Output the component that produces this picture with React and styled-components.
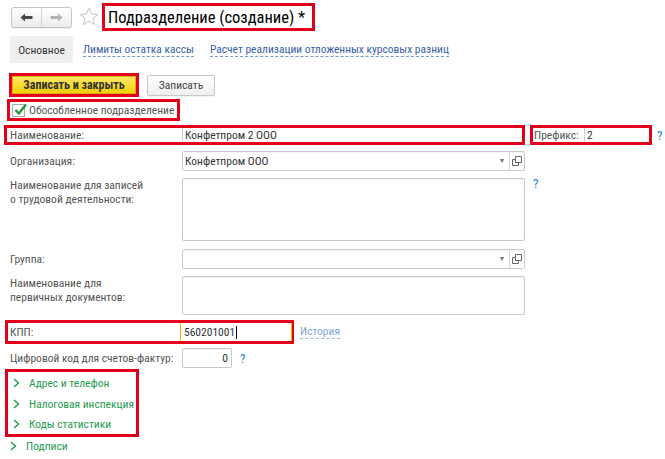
import React from "react";
import styled, { createGlobalStyle } from "styled-components";

const Global = createGlobalStyle`
  html, body { margin: 0; padding: 0; background: #fff; }
  body { font-family: "Roboto Condensed", "Liberation Sans", Arial, sans-serif; font-size: 11.5px; color: #555; }
  * { box-sizing: border-box; }
`;

const RED = "#e2001a";

const Page = styled.div`
  width: 665px;
  height: 459px;
  overflow: hidden;
  padding: 0 0 0 10px;
  position: relative;
`;

const TopBar = styled.div`
  display: flex;
  align-items: center;
  height: 28px;
  margin-top: 3px;
`;

const NavGroup = styled.div`
  display: flex;
  margin-left: 1px;
  width: 61px;
  height: 21px;
  border: 1px solid #c4c4c4;
  border-radius: 3px;
  background: linear-gradient(#ffffff, #ececec);
  box-shadow: 0 1px 1px rgba(0,0,0,0.08);
`;

const NavBtn = styled.div`
  flex: 1;
  display: flex;
  align-items: center;
  justify-content: center;
  & + & { border-left: 1px solid #d4d4d4; }
`;

const StarWrap = styled.div`
  margin-left: 7px;
  width: 20px;
  height: 20px;
  display: flex;
  align-items: center;
  justify-content: center;
`;

const TitleBox = styled.div`
  margin-left: 3px;
  height: 28px;
  width: 213px;
  border: 3px solid ${RED};
  padding-left: 3px;
  display: flex;
  align-items: center;
  font-size: 16.5px;
  color: #000;
  white-space: nowrap;
`;

const Tabs = styled.div`
  display: flex;
  align-items: center;
  margin-top: 5px;
  height: 27px;
`;

const ActiveTab = styled.div`
  width: 63px;
  height: 27px;
  background: #efefef;
  display: flex;
  align-items: center;
  justify-content: center;
  color: #333;
  border-radius: 2px;
`;

const TabLink = styled.span`
  margin-left: ${p => p.$ml}px;
  color: #3a5ea8;
  border-bottom: 1px dashed #7f97c8;
  line-height: 13px;
  white-space: nowrap;
`;

const ButtonBar = styled.div`
  display: flex;
  align-items: center;
  margin-top: 10px;
  margin-left: -1px;
`;

const HighlightBtn = styled.div`
  border: 3px solid ${RED};
  height: 24px;
  width: 130px;
`;

const PrimaryButton = styled.div`
  height: 18px;
  width: 124px;
  background: linear-gradient(#ffe86a, #f6cf00);
  border: 1px solid #d7b000;
  display: flex;
  align-items: center;
  justify-content: center;
  font-weight: bold;
  font-size: 12px;
  color: #333;
  white-space: nowrap;
`;

const Button = styled.div`
  margin-left: 8px;
  height: 21px;
  width: 68px;
  border: 1px solid #c8c8c8;
  border-radius: 2px;
  background: linear-gradient(#ffffff, #efefef);
  display: flex;
  align-items: center;
  justify-content: center;
  color: #444;
  box-shadow: 0 1px 1px rgba(0,0,0,0.06);
`;

const CheckRow = styled.div`
  margin-top: 2px;
  margin-left: -3px;
  width: 173px;
  height: 22px;
  border: 3px solid ${RED};
  display: flex;
  align-items: center;
  padding-left: 2px;
  white-space: nowrap;
`;

const CheckBox = styled.div`
  width: 13px;
  height: 13px;
  border: 1px solid #a9a9a9;
  background: #fff;
  position: relative;
  margin-right: 4px;
  flex: none;
  svg { position: absolute; left: 0px; top: -3px; }
`;

const Row = styled.div`
  display: flex;
  align-items: ${p => (p.$top ? "flex-start" : "center")};
  margin-top: ${p => p.$mt || 0}px;
`;

const HighlightRow = styled.div`
  display: flex;
  align-items: center;
  border: 3px solid ${RED};
  height: ${p => p.$h}px;
  width: ${p => p.$w}px;
  margin-left: ${p => p.$ml}px;
  padding-left: ${p => p.$pl}px;
`;

const Label = styled.div`
  width: ${p => p.$w || 172}px;
  flex: none;
  line-height: 14px;
  white-space: nowrap;
`;

const PlainValue = styled.div`
  flex: 1;
  align-self: stretch;
  border-left: 1px solid #cfcfcf;
  padding-left: 2px;
  display: flex;
  align-items: center;
  color: #333;
  white-space: nowrap;
`;

const Field = styled.div`
  width: ${p => p.$w || 343}px;
  height: ${p => p.$h || 20}px;
  border: 1px solid #c9c9c9;
  border-radius: 2px;
  background: #fff;
  display: flex;
  align-items: center;
  color: #333;
  justify-content: ${p => (p.$right ? "flex-end" : "flex-start")};
  padding: 0 ${p => (p.$right ? 3 : 2)}px;
  box-shadow: inset 0 1px 1px rgba(0,0,0,0.04);
`;

const FieldText = styled.div`
  flex: 1;
  white-space: nowrap;
`;

const FieldBtn = styled.div`
  width: 14px;
  align-self: stretch;
  display: flex;
  align-items: center;
  justify-content: center;
  color: #777;
  font-size: 7px;
  & + & { border-left: 1px solid #d6d6d6; width: 15px; margin-right: -2px; }
`;

const Help = styled.span`
  color: #2c7fc6;
  font-size: 13px;
  margin-left: ${p => p.$ml || 8}px;
  align-self: ${p => (p.$top ? "flex-start" : "center")};
  margin-top: ${p => p.$mt || 0}px;
`;

const FocusField = styled.div`
  flex: 1;
  align-self: stretch;
  border-left: 1px solid #f1b400;
  border-right: 1px solid #f1b400;
  margin-left: -1px;
  margin-right: -1px;
  padding-left: 3px;
  display: flex;
  align-items: center;
  color: #333;
`;

const Caret = styled.span`
  display: inline-block;
  width: 1px;
  height: 13px;
  background: #000;
  margin-left: 1px;
`;

const HistoryLink = styled.span`
  margin-left: 6px;
  color: #7ea2da;
  border-bottom: 1px dashed #9ab5e0;
  line-height: 13px;
`;

const GroupBox = styled.div`
  margin-top: 1px;
  margin-left: -5px;
  width: 134px;
  border: 3px solid ${RED};
  padding-left: 5px;
`;

const GroupItem = styled.div`
  height: ${p => p.$h || 21}px;
  display: flex;
  align-items: center;
  color: #1f9a4e;
  white-space: nowrap;
  margin-top: ${p => p.$mt || 0}px;
  svg { margin-right: 9px; flex: none; }
`;

const Chevron = () => (
  <svg width="7" height="10" viewBox="0 0 7 10">
    <path d="M1 1 L5.5 5 L1 9" fill="none" stroke="#1f9a4e" strokeWidth="1.4" />
  </svg>
);

const ArrowLeft = ({ color }) => (
  <svg width="13" height="9" viewBox="0 0 13 9">
    <path d="M0.5 4.5 L5 0.5 L5 3 L12.5 3 L12.5 6 L5 6 L5 8.5 Z" fill={color} />
  </svg>
);

const ArrowRight = ({ color }) => (
  <svg width="13" height="9" viewBox="0 0 13 9">
    <path d="M12.5 4.5 L8 0.5 L8 3 L0.5 3 L0.5 6 L8 6 L8 8.5 Z" fill={color} />
  </svg>
);

const Star = () => (
  <svg width="20" height="20" viewBox="0 0 20 20">
    <path
      d="M10 1.2 L12.6 7 L18.8 7.4 L14 11.4 L15.6 17.6 L10 14.2 L4.4 17.6 L6 11.4 L1.2 7.4 L7.4 7 Z"
      fill="#fff"
      stroke="#c4c4c4"
      strokeWidth="1"
      strokeLinejoin="round"
    />
  </svg>
);

const OpenIcon = () => (
  <svg width="10" height="10" viewBox="0 0 10 10">
    <path d="M3.5 0.5 H9.5 V6.5 H3.5 Z" fill="none" stroke="#666" strokeWidth="1" />
    <path d="M3.5 3.5 H0.5 V9.5 H6.5 V6.5" fill="none" stroke="#666" strokeWidth="1" />
  </svg>
);

const Check = () => (
  <svg width="15" height="15" viewBox="0 0 15 15">
    <path d="M2.5 8 L5.8 11.5 L13 2.5" fill="none" stroke="#23953a" strokeWidth="2.4" />
  </svg>
);

const SelectField = ({ value }) => (
  <Field>
    <FieldText>{value}</FieldText>
    <FieldBtn>▼</FieldBtn>
    <FieldBtn><OpenIcon /></FieldBtn>
  </Field>
);

export default function App() {
  return (
    <Page>
      <Global />
      <TopBar>
        <NavGroup>
          <NavBtn><ArrowLeft color="#4a4a4a" /></NavBtn>
          <NavBtn><ArrowRight color="#b0b0b0" /></NavBtn>
        </NavGroup>
        <StarWrap><Star /></StarWrap>
        <TitleBox>Подразделение (создание) *</TitleBox>
      </TopBar>

      <Tabs>
        <ActiveTab>Основное</ActiveTab>
        <TabLink $ml={10}>Лимиты остатка кассы</TabLink>
        <TabLink $ml={16}>Расчет реализации отложенных курсовых разниц</TabLink>
      </Tabs>

      <ButtonBar>
        <HighlightBtn>
          <PrimaryButton>Записать и закрыть</PrimaryButton>
        </HighlightBtn>
        <Button>Записать</Button>
      </ButtonBar>

      <CheckRow>
        <CheckBox><Check /></CheckBox>
        Обособленное подразделение
      </CheckRow>

      <Row $mt={4}>
        <HighlightRow $h={20} $w={521} $ml={-6} $pl={3}>
          <Label>Наименование:</Label>
          <PlainValue>Конфетпром 2 ООО</PlainValue>
        </HighlightRow>
        <HighlightRow $h={20} $w={122} $ml={5} $pl={1}>
          <Label $w={50}>Префикс:</Label>
          <PlainValue>2</PlainValue>
        </HighlightRow>
        <Help $ml={5}>?</Help>
      </Row>

      <Row $mt={6}>
        <Label>Организация:</Label>
        <SelectField value="Конфетпром ООО" />
      </Row>

      <Row $mt={7} $top>
        <Label>Наименование для записей<br />о трудовой деятельности:</Label>
        <Field $h={63} />
        <Help $top $mt={-2}>?</Help>
      </Row>

      <Row $mt={8}>
        <Label>Группа:</Label>
        <SelectField value="" />
      </Row>

      <Row $mt={7} $top>
        <Label>Наименование для<br />первичных документов:</Label>
        <Field $h={39} />
      </Row>

      <Row $mt={5}>
        <HighlightRow $h={24} $w={289} $ml={-5} $pl={2}>
          <Label $w={171}>КПП:</Label>
          <FocusField>560201001<Caret /></FocusField>
        </HighlightRow>
        <HistoryLink>История</HistoryLink>
      </Row>

      <Row $mt={4}>
        <Label>Цифровой код для счетов-фактур:</Label>
        <Field $w={50} $right>0</Field>
        <Help>?</Help>
      </Row>

      <GroupBox>
        <GroupItem><Chevron />Адрес и телефон</GroupItem>
        <GroupItem><Chevron />Налоговая инспекция</GroupItem>
        <GroupItem $h={20}><Chevron />Коды статистики</GroupItem>
      </GroupBox>
      <GroupItem $mt={-2}>
        <Chevron />Подписи
      </GroupItem>
    </Page>
  );
}
